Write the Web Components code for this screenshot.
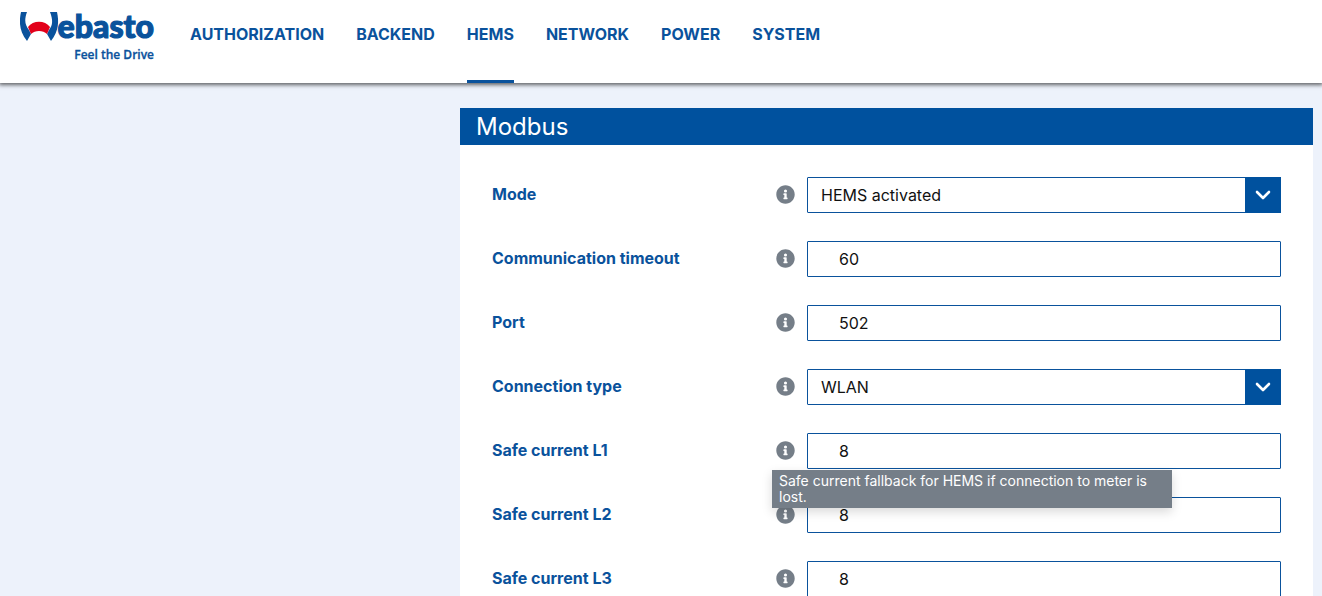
<!DOCTYPE html>
<html lang="en">
<head>
<meta charset="utf-8">
<meta name="viewport" content="width=device-width, initial-scale=1">
<title>Webasto - HEMS</title>
<style>
    body {
        --blue: #00519e;
        --label: #0a529c;
        --grey: #757e88;
        margin: 0;
        min-height: 100vh;
        background: #edf2fb;
        color: #111;
        font: 16px/20px Inter, sans-serif;
        overflow: hidden;
    }
</style>
</head>
<body>
    <app-header>
        <brand-logo slot="logo"></brand-logo>
        <nav-item>AUTHORIZATION</nav-item>
        <nav-item>BACKEND</nav-item>
        <nav-item active>HEMS</nav-item>
        <nav-item>NETWORK</nav-item>
        <nav-item>POWER</nav-item>
        <nav-item>SYSTEM</nav-item>
    </app-header>
    <page-layout>
        <settings-card>
            <span slot="title">Modbus</span>
            <setting-row label="Mode" type="select" value="HEMS activated"></setting-row>
            <setting-row label="Communication timeout" value="60"></setting-row>
            <setting-row label="Port" value="502"></setting-row>
            <setting-row label="Connection type" type="select" value="WLAN"></setting-row>
            <setting-row label="Safe current L1" value="8" hint="Safe current fallback for HEMS if connection to meter is lost."></setting-row>
            <setting-row label="Safe current L2" value="8"></setting-row>
            <setting-row label="Safe current L3" value="8"></setting-row>
        </settings-card>
    </page-layout>

<script>
class AppHeader extends HTMLElement {
    constructor() {
        super();
        this.attachShadow({ mode: 'open' }).innerHTML = `
            <style>
                :host {
                    display: block;
                    position: relative;
                    background: #fff;
                    box-shadow: 0 1px 4px 1px rgba(0, 0, 0, 0.6);
                }
                header {
                    display: flex;
                    gap: 35px;
                    height: 83px;
                    padding: 0 20px;
                }
                nav {
                    display: flex;
                    gap: 32px;
                }
            </style>
            <header>
                <slot name="logo"></slot>
                <nav><slot></slot></nav>
            </header>
        `;
    }
}

class BrandLogo extends HTMLElement {
    constructor() {
        super();
        this.attachShadow({ mode: 'open' }).innerHTML = `
            <style>
                :host {
                    display: block;
                    color: var(--label);
                }
                svg {
                    display: block;
                }
                text {
                    fill: currentColor;
                }
                .name {
                    font: 900 32px Lato, sans-serif;
                    stroke: currentColor;
                    stroke-width: 1.2;
                }
                .claim {
                    font: 600 12px "Open Sans", sans-serif;
                    stroke: currentColor;
                    stroke-width: 0.3;
                }
            </style>
            <svg width="135" height="64" viewBox="0 0 135 64" role="img" aria-label="Webasto Feel the Drive">
                <path fill="#0a529c" d="M1 12 H7 C4 20 5 25 9 30 L11 34 L7 41 C-1 31 -1 21 1 12 Z"/>
                <path fill="#0a529c" d="M30 12 H37 C39 21 39 31 31 41 L27 34 L29 30 C33 25 33 20 30 12 Z"/>
                <path fill="#e2001a" d="M8 27 C13 20 25 20 30 27 L27 34 C23 30 15 30 11 34 Z"/>
                <text class="name" x="134" y="38" text-anchor="end">ebasto</text>
                <text class="claim" x="134" y="59" text-anchor="end">Feel the Drive</text>
            </svg>
        `;
    }
}

class NavItem extends HTMLElement {
    constructor() {
        super();
        this.attachShadow({ mode: 'open' }).innerHTML = `
            <style>
                :host {
                    display: flex;
                }
                a {
                    box-sizing: border-box;
                    padding-top: 24px;
                    border-bottom: 3px solid transparent;
                    color: var(--label);
                    font-weight: 700;
                    text-decoration: none;
                }
                :host([active]) a {
                    border-color: var(--label);
                }
            </style>
            <a href="#"><slot></slot></a>
        `;
    }
}

class PageLayout extends HTMLElement {
    constructor() {
        super();
        this.attachShadow({ mode: 'open' }).innerHTML = `
            <style>
                :host {
                    display: grid;
                    grid-template-columns: 460px 1fr;
                    padding: 25px 9px 0 0;
                }
                main {
                    grid-column: 2;
                }
            </style>
            <main><slot></slot></main>
        `;
    }
}

class SettingsCard extends HTMLElement {
    constructor() {
        super();
        this.attachShadow({ mode: 'open' }).innerHTML = `
            <style>
                :host {
                    display: block;
                    background: #fff;
                }
                h2 {
                    margin: 0;
                    padding: 0 16px;
                    background: var(--blue);
                    color: #fff;
                    font-size: 24px;
                    font-weight: 400;
                    line-height: 37px;
                }
                .rows {
                    display: flex;
                    flex-direction: column;
                    gap: 28px;
                    padding: 32px;
                }
            </style>
            <h2><slot name="title"></slot></h2>
            <div class="rows"><slot></slot></div>
        `;
    }
}

class SettingRow extends HTMLElement {
    connectedCallback() {
        if (this.shadowRoot) return;
        const value = this.getAttribute('value');
        const hint = this.getAttribute('hint');
        const field = this.getAttribute('type') === 'select'
            ? `<div class="select">
                    <select id="field"><option>${value}</option></select>
                    <svg viewBox="0 0 36 36" aria-hidden="true"><path d="M12 15 L18 21 L24 15"/></svg>
                </div>`
            : `<input id="field" type="text" value="${value}">`;

        this.attachShadow({ mode: 'open' }).innerHTML = `
            <style>
                :host {
                    display: grid;
                    grid-template-columns: 315px 1fr;
                    position: relative;
                }
                .head {
                    display: flex;
                    align-items: center;
                    justify-content: space-between;
                    padding: 0 12px 2px 0;
                }
                label {
                    color: var(--label);
                    font-weight: 700;
                }
                .info {
                    width: 19px;
                    height: 19px;
                    padding: 0;
                    border: 0;
                    background: none;
                }
                .info svg {
                    display: block;
                }
                input, select {
                    box-sizing: border-box;
                    width: 100%;
                    height: 36px;
                    border: 1px solid var(--label);
                    border-radius: 1px;
                    background: #fff;
                    color: #111;
                    font: inherit;
                    outline: none;
                }
                input {
                    padding: 0 31px;
                }
                select {
                    padding: 0 49px 0 13px;
                    appearance: none;
                }
                .select {
                    display: grid;
                    grid-template-columns: 1fr 36px;
                }
                .select select {
                    grid-area: 1 / 1 / 2 / 3;
                }
                .select svg {
                    grid-area: 1 / 2;
                    width: 36px;
                    height: 36px;
                    background: var(--blue);
                    pointer-events: none;
                }
                .select path {
                    fill: none;
                    stroke: #fff;
                    stroke-width: 2.6;
                    stroke-linecap: round;
                    stroke-linejoin: round;
                }
                .tooltip {
                    position: absolute;
                    z-index: 1;
                    top: 37px;
                    left: 280px;
                    box-sizing: border-box;
                    width: 400px;
                    padding: 3px 7px;
                    background: var(--grey);
                    box-shadow: 0 4px 10px rgba(0, 0, 0, 0.15);
                    color: #fff;
                    font-size: 14px;
                    line-height: 16px;
                }
            </style>
            <div class="head">
                <label for="field">${this.getAttribute('label')}</label>
                <button class="info" type="button" aria-label="Info">
                    <svg width="19" height="19" viewBox="0 0 512 512">
                        <path fill="#757e88" d="M256 8C119 8 8 119 8 256s111 248 248 248 248-111 248-248S393 8 256 8zm0 110a42 42 0 1 1 0 84 42 42 0 0 1 0-84zm56 254a12 12 0 0 1-12 12h-88a12 12 0 0 1-12-12v-24a12 12 0 0 1 12-12h12v-64h-12a12 12 0 0 1-12-12v-24a12 12 0 0 1 12-12h64a12 12 0 0 1 12 12v100h12a12 12 0 0 1 12 12z"/>
                    </svg>
                </button>
            </div>
            ${field}
            ${hint ? `<div class="tooltip" role="tooltip">${hint}</div>` : ''}
        `;
    }
}

customElements.define('app-header', AppHeader);
customElements.define('brand-logo', BrandLogo);
customElements.define('nav-item', NavItem);
customElements.define('page-layout', PageLayout);
customElements.define('settings-card', SettingsCard);
customElements.define('setting-row', SettingRow);
</script>
</body>
</html>
